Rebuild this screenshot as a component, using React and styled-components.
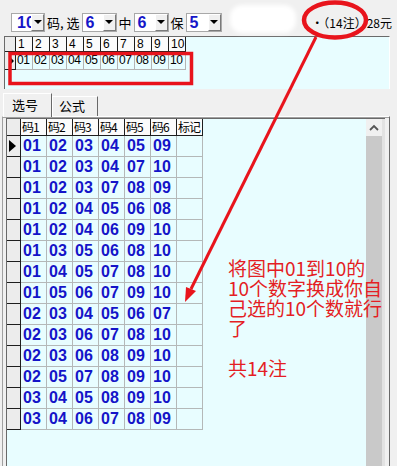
import React from "react";
import styled, { createGlobalStyle } from "styled-components";

const GlobalStyle = createGlobalStyle`
  html, body {
    margin: 0;
    padding: 0;
    background: #f0f0f0;
  }
  body {
    font-family: "Liberation Sans", "Noto Sans CJK SC", sans-serif;
  }
`;

const TOP_NUMS = ["01", "02", "03", "04", "05", "06", "07", "08", "09", "10"];

const ROWS = [
  ["01", "02", "03", "04", "05", "09"],
  ["01", "02", "03", "04", "07", "10"],
  ["01", "02", "03", "07", "08", "09"],
  ["01", "02", "04", "05", "06", "08"],
  ["01", "02", "04", "06", "09", "10"],
  ["01", "03", "05", "06", "08", "10"],
  ["01", "04", "05", "07", "08", "10"],
  ["01", "05", "06", "07", "09", "10"],
  ["02", "03", "04", "05", "06", "07"],
  ["02", "03", "06", "07", "08", "10"],
  ["02", "03", "06", "08", "09", "10"],
  ["02", "05", "07", "08", "09", "10"],
  ["03", "04", "05", "08", "09", "10"],
  ["03", "04", "06", "07", "08", "09"]
];

const HEADERS = ["码1", "码2", "码3", "码4", "码5", "码6", "标记"];

const NOTE = ["将图中01到10的", "10个数字换成你自", "己选的10个数就行", "了", "\u00a0", "共14注"];

export default function App() {
  return (
    <Window>
      <GlobalStyle />
      <Toolbar>
        <Combo w={34}>
          <ComboValue pad={5}>10</ComboValue>
          <DropBtn>
            <DropArrow />
          </DropBtn>
        </Combo>
        <Label>码, 选</Label>
        <Combo w={35}>
          <ComboValue>6</ComboValue>
          <DropBtn>
            <DropArrow />
          </DropBtn>
        </Combo>
        <Label>中</Label>
        <Combo w={35}>
          <ComboValue>6</ComboValue>
          <DropBtn>
            <DropArrow />
          </DropBtn>
        </Combo>
        <Label>保</Label>
        <Combo w={36}>
          <ComboValue>5</ComboValue>
          <DropBtn>
            <DropArrow />
          </DropBtn>
        </Combo>
        <Smudge />
        <Summary>·（14注）28元</Summary>
      </Toolbar>

      <TopGrid>
        <TopHead corner />
        {TOP_NUMS.map((n, i) => (
          <TopHead key={"h" + n}>{i + 1}</TopHead>
        ))}
        <TopIndicator>
          <Pointer small />
        </TopIndicator>
        {TOP_NUMS.map(n => (
          <TopCell key={n}>{n}</TopCell>
        ))}
      </TopGrid>

      <TabsRow>
        <Tab active>选号</Tab>
        <Tab>公式</Tab>
      </TabsRow>

      <Panel>
        <GridFrame>
          <DataArea>
            <DataGrid>
              <HeadCell corner />
              {HEADERS.map(h => (
                <HeadCell key={h}>{h}</HeadCell>
              ))}
              {ROWS.map((row, r) => (
                <React.Fragment key={r}>
                  <RowMark>{r === 0 ? <Pointer /> : null}</RowMark>
                  {row.map((v, c) => (
                    <NumCell key={c}>{v}</NumCell>
                  ))}
                  <NumCell />
                </React.Fragment>
              ))}
            </DataGrid>
          </DataArea>
          <ScrollBar>
            <ScrollUp>
              <svg width="10" height="7" viewBox="0 0 10 7">
                <path d="M1 6 L5 2 L9 6" fill="none" stroke="#555" strokeWidth="1.8" />
              </svg>
            </ScrollUp>
            <ScrollThumb />
          </ScrollBar>
        </GridFrame>
      </Panel>

      <Marks width="397" height="466" viewBox="0 0 397 466">
        <ellipse cx="335" cy="20" rx="31" ry="17.5" fill="none" stroke="#e8141c" strokeWidth="4.5" />
        <rect x="10" y="53.5" width="181.5" height="30" fill="none" stroke="#e8141c" strokeWidth="3.5" />
        <line x1="316" y1="37" x2="191" y2="289" stroke="#e8141c" strokeWidth="3" />
        <polygon points="185,302 196,291 186,287" fill="#e8141c" />
      </Marks>

      <Note>
        {NOTE.map((l, i) => (
          <NoteLine key={i}>{l}</NoteLine>
        ))}
      </Note>
    </Window>
  );
}

const Window = styled.div`
  position: relative;
  width: 397px;
  height: 466px;
  overflow: hidden;
  background: #f0f0f0;
  display: flex;
  flex-direction: column;
`;

const Toolbar = styled.div`
  height: 36px;
  box-sizing: border-box;
  padding: 8px 5px 0 11px;
  display: flex;
  align-items: center;
  font-family: "Noto Sans CJK SC", sans-serif;
  font-size: 13px;
  color: #000;
`;

const Combo = styled.div`
  width: ${p => p.w}px;
  height: 19px;
  box-sizing: border-box;
  display: flex;
  background: #fff;
  border: 1px solid #a8a8a8;
`;

const ComboValue = styled.div`
  flex: 1;
  overflow: hidden;
  padding-left: ${p => p.pad || 3}px;
  font-family: "Liberation Sans", sans-serif;
  font-weight: bold;
  font-size: 16px;
  line-height: 17px;
  color: #1616c8;
  white-space: nowrap;
`;

const DropBtn = styled.div`
  width: 13px;
  flex-shrink: 0;
  box-sizing: border-box;
  background: #f0f0f0;
  border-left: 1px solid #fff;
  border-top: 1px solid #fff;
  border-right: 1px solid #7a7a7a;
  border-bottom: 1px solid #7a7a7a;
  display: flex;
  align-items: center;
  justify-content: center;
`;

const DropArrow = styled.span`
  width: 0;
  height: 0;
  border-top: 4px solid #000;
  border-left: 4px solid transparent;
  border-right: 4px solid transparent;
`;

const Label = styled.span`
  padding: 0 2px;
  white-space: nowrap;
`;

const Smudge = styled.div`
  width: 66px;
  height: 28px;
  margin-left: 8px;
  margin-top: -6px;
  background: #fff;
  border-radius: 12px;
  filter: blur(2px);
`;

const Summary = styled.span`
  margin-left: auto;
  font-size: 12px;
  white-space: nowrap;
`;

const TopGrid = styled.div`
  height: 53px;
  margin: 0 7px 0 4px;
  box-sizing: border-box;
  background: #e8fdff;
  border-top: 1px solid #6a6a6a;
  border-left: 1px solid #6a6a6a;
  border-right: 1px solid #fff;
  display: grid;
  grid-template-columns: 11px repeat(10, 17px);
  grid-template-rows: 15px 18px;
  align-content: start;
  font-family: "Liberation Sans", sans-serif;
  font-size: 12px;
  color: #000;
`;

const TopHead = styled.div`
  box-sizing: border-box;
  background: ${p => (p.corner ? "#ececec" : "#fbfbfb")};
  border-right: 1px solid #1e1e1e;
  border-bottom: 1px solid #1e1e1e;
  padding-left: 2px;
  line-height: 14px;
`;

const TopIndicator = styled.div`
  box-sizing: border-box;
  background: #ececec;
  border-right: 1px solid #1e1e1e;
  border-bottom: 1px solid #1e1e1e;
  display: flex;
  align-items: center;
  justify-content: flex-end;
  padding-right: 1px;
`;

const TopCell = styled.div`
  box-sizing: border-box;
  border-right: 1px solid #b4b4b4;
  border-bottom: 1px solid #b4b4b4;
  padding-left: 1px;
  line-height: 17px;
  letter-spacing: -0.3px;
`;

const Pointer = styled.span`
  width: 0;
  height: 0;
  border-left: ${p => (p.small ? 4 : 7)}px solid #000;
  border-top: ${p => (p.small ? 4 : 6)}px solid transparent;
  border-bottom: ${p => (p.small ? 4 : 6)}px solid transparent;
`;

const TabsRow = styled.div`
  height: 27px;
  display: flex;
  align-items: flex-end;
  padding-left: 3px;
  font-family: "Noto Sans CJK SC", sans-serif;
  font-size: 13px;
  color: #000;
`;

const Tab = styled.div`
  box-sizing: border-box;
  width: ${p => (p.active ? 49 : 46)}px;
  height: ${p => (p.active ? 24 : 20)}px;
  margin-bottom: ${p => (p.active ? -1 : 0)}px;
  padding: ${p => (p.active ? "2px 0 0 8px" : "0 0 0 6px")};
  background: #f0f0f0;
  border-top: 1px solid #fff;
  border-left: 1px solid #fff;
  border-right: 1px solid #696969;
  line-height: 18px;
  position: relative;
  z-index: ${p => (p.active ? 1 : 0)};
`;

const Panel = styled.div`
  flex: 1;
  min-height: 0;
  display: flex;
  margin: 0 7px 0 2px;
  padding: 1px 4px 0 3px;
  border-top: 1px solid #fff;
  border-left: 1px solid #a0a0a0;
  border-right: 1px solid #696969;
  box-shadow: inset 0 1px 0 #a0a0a0;
`;

const GridFrame = styled.div`
  flex: 1;
  display: flex;
  border-top: 1px solid #696969;
  border-left: 1px solid #696969;
  background: #e8fdff;
`;

const DataArea = styled.div`
  flex: 1;
  overflow: hidden;
`;

const DataGrid = styled.div`
  display: grid;
  grid-template-columns: 14px repeat(7, 26px);
  grid-template-rows: 17px repeat(${ROWS.length}, 21px);
`;

const HeadCell = styled.div`
  box-sizing: border-box;
  background: ${p => (p.corner ? "#ececec" : "#fbfbfb")};
  border-right: 1px solid #1e1e1e;
  border-bottom: 1px solid #1e1e1e;
  padding-left: 1px;
  font-family: "Noto Sans CJK SC", sans-serif;
  font-size: 12px;
  line-height: 16px;
  letter-spacing: -1px;
  color: #000;
  white-space: nowrap;
  overflow: hidden;
`;

const RowMark = styled.div`
  box-sizing: border-box;
  background: #ececec;
  border-right: 1px solid #1e1e1e;
  border-bottom: 1px solid #1e1e1e;
  display: flex;
  align-items: center;
  padding-left: 2px;
`;

const NumCell = styled.div`
  box-sizing: border-box;
  border-right: 1px solid #b4b8b8;
  border-bottom: 1px solid #b4b8b8;
  padding-left: 2px;
  font-family: "Liberation Sans", sans-serif;
  font-weight: bold;
  font-size: 16px;
  line-height: 20px;
  color: #1414c8;
`;

const ScrollBar = styled.div`
  width: 16px;
  display: flex;
  flex-direction: column;
  border-right: 3px solid #e2e2e2;
`;

const ScrollUp = styled.div`
  height: 17px;
  background: #f0f0f0;
  display: flex;
  align-items: center;
  justify-content: center;
`;

const ScrollThumb = styled.div`
  flex: 1;
  background: #c9c9c9;
`;

const Marks = styled.svg`
  position: absolute;
  top: 0;
  left: 0;
  pointer-events: none;
`;

const Note = styled.div`
  position: absolute;
  left: 228px;
  top: 258px;
  font-family: "Noto Sans CJK SC", sans-serif;
  font-size: 19px;
  line-height: 20px;
  color: #e41e24;
  white-space: nowrap;
`;

const NoteLine = styled.div`
  height: 20px;
`;
